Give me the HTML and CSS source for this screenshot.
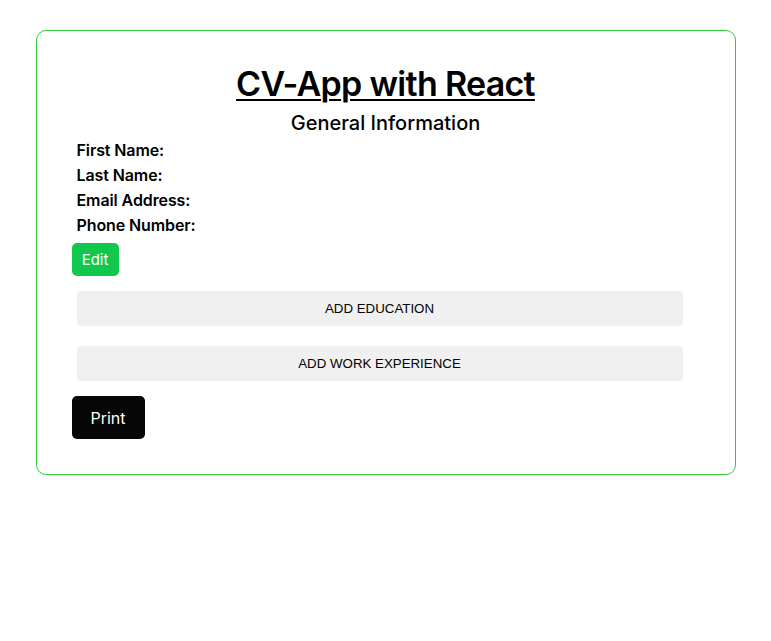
FILE: index.html
```html
<!DOCTYPE html>
<html>
<head>
<meta charset="utf-8">
<link rel="stylesheet" href="styles.css">
</head>
<body>
<div class="card">
  <h1 class="title">CV-App with React</h1>
  <h2 class="subtitle">General Information</h2>
  <div class="info">
    <div class="info-row">First Name:</div>
    <div class="info-row">Last Name:</div>
    <div class="info-row">Email Address:</div>
    <div class="info-row">Phone Number:</div>
  </div>
  <button class="btn-edit">Edit</button>
  <div class="sections">
    <button class="btn-add">Add Education</button>
    <button class="btn-add">Add Work Experience</button>
  </div>
  <button class="btn-print">Print</button>
</div>
</body>
</html>
```
FILE: styles.css
```css
body {
  margin: 0;
  background: #fff;
  font-family: "Inter", "Noto Sans", sans-serif;
  color: #000;
}
.card {
  box-sizing: border-box;
  width: 700px;
  margin: 30px auto 0;
  border: 1px solid #2fcb3c;
  border-radius: 10px;
  padding: 28px 35px 35px;
  display: flex;
  flex-direction: column;
  align-items: flex-start;
}
.title {
  align-self: stretch;
  text-align: center;
  font-size: 34px;
  font-weight: 600;
  text-decoration: underline;
  text-decoration-thickness: 2px;
  text-underline-offset: 3px;
  margin: 0;
  line-height: 50px;
  letter-spacing: -0.7px;
}
.subtitle {
  align-self: stretch;
  text-align: center;
  font-size: 20px;
  font-weight: 500;
  margin: 0;
  line-height: 28px;
}
.info {
  padding-left: 5px;
  margin-top: 1px;
  display: flex;
  flex-direction: column;
}
.info-row {
  font-size: 16px;
  font-weight: 600;
  line-height: 25px;
  letter-spacing: -0.1px;
}
.btn-edit {
  margin-top: 5px;
  width: 47px;
  height: 33px;
  border: none;
  border-radius: 5px;
  background: #12c84c;
  color: #fff;
  font-family: inherit;
  font-size: 15px;
  padding: 0;
}
.sections {
  display: flex;
  flex-direction: column;
  gap: 20px;
  margin: 15px 0 15px 5px;
}
.btn-add {
  width: 606px;
  height: 35px;
  border: none;
  border-radius: 4px;
  background: #f0f0f0;
  font-family: "Liberation Sans", Arial, sans-serif;
  font-size: 13.3px;
  text-transform: uppercase;
  color: #000;
  padding: 0;
}
.btn-print {
  width: 73px;
  height: 43px;
  border: none;
  border-radius: 5px;
  background: #050605;
  color: #fff;
  font-family: inherit;
  font-size: 16px;
  padding: 0;
}
```
